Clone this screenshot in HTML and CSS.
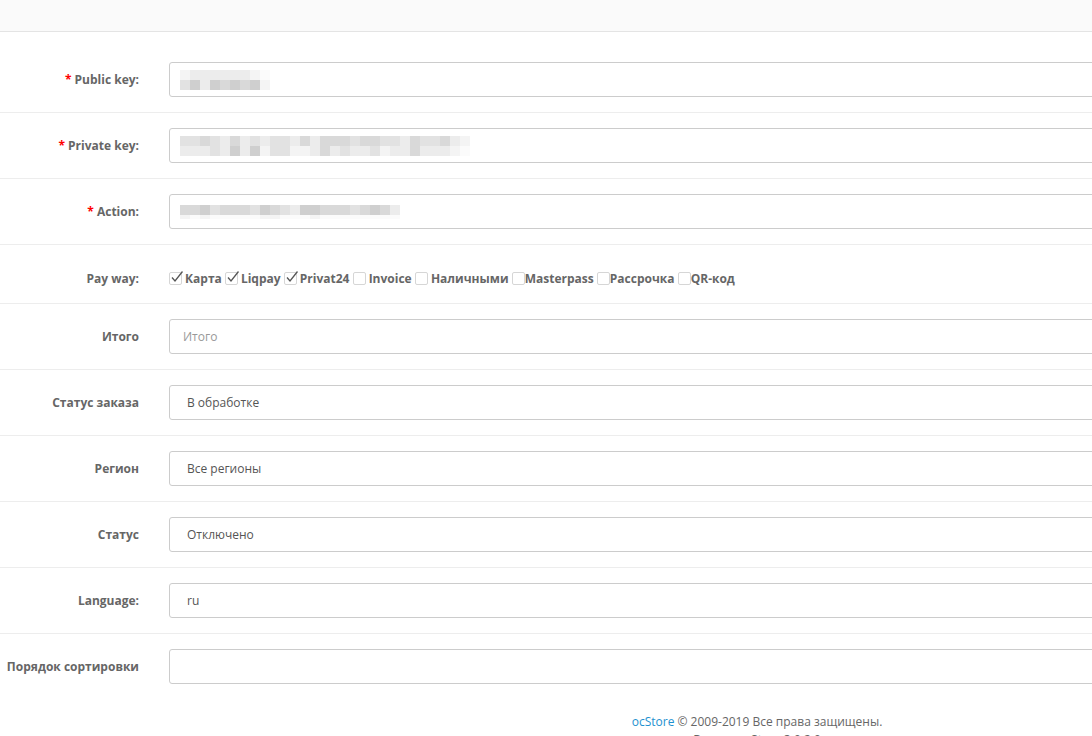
FILE: index.html
```html
<!DOCTYPE html>
<html lang="ru">
<head>
<meta charset="utf-8">
<title>LiqPay</title>
<link rel="stylesheet" href="styles.css">
</head>
<body>
<div class="page">
  <div class="topbar"></div>
  <form class="form">
    <div class="group">
      <label class="label"><span class="req">*</span> Public key:</label>
      <div class="control">
        <div class="input blurred">
          <div class="pix">
            <div class="pxrow"><span class="s1"></span><span class="s2"></span><span class="s2"></span><span class="s2"></span><span class="s2"></span><span class="s2"></span><span class="s2"></span><span class="s1"></span><span class="s0"></span></div>
            <div class="pxrow"><span class="s3"></span><span class="s5"></span><span class="s2"></span><span class="s5"></span><span class="s4"></span><span class="s5"></span><span class="s4"></span><span class="s5"></span><span class="s1"></span></div>
          </div>
        </div>
      </div>
    </div>
    <div class="group">
      <label class="label"><span class="req">*</span> Private key:</label>
      <div class="control">
        <div class="input blurred">
          <div class="pix">
            <div class="pxrow"><span class="s3"></span><span class="s3"></span><span class="s4"></span><span class="s3"></span><span class="s2"></span><span class="s4"></span><span class="s2"></span><span class="s3"></span><span class="s2"></span><span class="s3"></span><span class="s3"></span><span class="s2"></span><span class="s4"></span><span class="s2"></span><span class="s4"></span><span class="s4"></span><span class="s4"></span><span class="s3"></span><span class="s4"></span><span class="s4"></span><span class="s3"></span><span class="s3"></span><span class="s2"></span><span class="s4"></span><span class="s3"></span><span class="s3"></span><span class="s4"></span><span class="s2"></span><span class="s1"></span></div>
            <div class="pxrow"><span class="s2"></span><span class="s2"></span><span class="s2"></span><span class="s3"></span><span class="s2"></span><span class="s5"></span><span class="s2"></span><span class="s5"></span><span class="s1"></span><span class="s3"></span><span class="s3"></span><span class="s1"></span><span class="s1"></span><span class="s2"></span><span class="s4"></span><span class="s2"></span><span class="s3"></span><span class="s2"></span><span class="s2"></span><span class="s3"></span><span class="s1"></span><span class="s2"></span><span class="s2"></span><span class="s4"></span><span class="s2"></span><span class="s2"></span><span class="s2"></span><span class="s1"></span><span class="s0"></span></div>
          </div>
        </div>
      </div>
    </div>
    <div class="group">
      <label class="label"><span class="req">*</span> Action:</label>
      <div class="control">
        <div class="input blurred">
          <div class="pix">
            <div class="pxrow"><span class="s4"></span><span class="s4"></span><span class="s5"></span><span class="s3"></span><span class="s4"></span><span class="s4"></span><span class="s4"></span><span class="s3"></span><span class="s5"></span><span class="s4"></span><span class="s3"></span><span class="s2"></span><span class="s5"></span><span class="s5"></span><span class="s4"></span><span class="s4"></span><span class="s4"></span><span class="s3"></span><span class="s4"></span><span class="s5"></span><span class="s4"></span><span class="s2"></span></div>
            <div class="pxrow thin"><span class="s1"></span><span class="s0"></span><span class="s1"></span><span class="s0"></span><span class="s0"></span><span class="s0"></span><span class="s0"></span><span class="s0"></span><span class="s1"></span><span class="s1"></span><span class="s0"></span><span class="s0"></span><span class="s0"></span><span class="s1"></span><span class="s0"></span><span class="s0"></span><span class="s0"></span><span class="s0"></span><span class="s0"></span><span class="s0"></span><span class="s0"></span><span class="s0"></span></div>
          </div>
        </div>
      </div>
    </div>
    <div class="group top">
      <label class="label pad">Pay way:</label>
      <div class="control checks">
        <label class="cb"><span class="box on"><svg viewBox="0 0 13 13" width="13" height="13"><path d="M2 6.5 L5 10 L12.5 0.5" fill="none" stroke="#555" stroke-width="1.3"/></svg></span>Карта</label>
        <label class="cb"><span class="box on"><svg viewBox="0 0 13 13" width="13" height="13"><path d="M2 6.5 L5 10 L12.5 0.5" fill="none" stroke="#555" stroke-width="1.3"/></svg></span>Liqpay</label>
        <label class="cb"><span class="box on"><svg viewBox="0 0 13 13" width="13" height="13"><path d="M2 6.5 L5 10 L12.5 0.5" fill="none" stroke="#555" stroke-width="1.3"/></svg></span>Privat24</label>
        <label class="cb"><span class="box"></span> Invoice</label>
        <label class="cb"><span class="box"></span> Наличными</label>
        <label class="cb"><span class="box"></span>Masterpass</label>
        <label class="cb"><span class="box"></span>Рассрочка</label>
        <label class="cb"><span class="box"></span>QR-код</label>
      </div>
    </div>
    <div class="group">
      <label class="label">Итого</label>
      <div class="control"><input class="input" type="text" placeholder="Итого"></div>
    </div>
    <div class="group">
      <label class="label">Статус заказа</label>
      <div class="control"><div class="input select">В обработке</div></div>
    </div>
    <div class="group">
      <label class="label">Регион</label>
      <div class="control"><div class="input select">Все регионы</div></div>
    </div>
    <div class="group">
      <label class="label">Статус</label>
      <div class="control"><div class="input select">Отключено</div></div>
    </div>
    <div class="group">
      <label class="label">Language:</label>
      <div class="control"><div class="input select">ru</div></div>
    </div>
    <div class="group">
      <label class="label">Порядок сортировки</label>
      <div class="control"><input class="input" type="text" value=""></div>
    </div>
  </form>
  <footer class="footer">
    <p><a href="#" class="link">ocStore</a> © 2009-2019 Все права защищены.</p>
    <p>Версия ocStore 3.0.2.0</p>
  </footer>
</div>
</body>
</html>
```
FILE: styles.css
```css
html, body {
  margin: 0;
  padding: 0;
  background: #fff;
  overflow: hidden;
}
body {
  font-family: "Open Sans", "Liberation Sans", sans-serif;
  font-size: 12px;
  line-height: 18px;
  color: #666;
}
.page {
  width: 1514px;
}
.topbar {
  height: 31px;
  background: #fafafa;
  border-bottom: 1px solid #e4e4e4;
}
.form {
  margin: 0;
  padding: 15px 0 0;
}
.group {
  display: flex;
  align-items: center;
  padding: 15px 0;
  border-top: 1px solid #ededed;
}
.group:first-child {
  border-top: 0;
}
.group.top {
  align-items: flex-start;
  padding: 15px 0 15px;
}
.label {
  width: 139px;
  flex: none;
  margin-right: 30px;
  text-align: right;
  font-weight: 700;
  color: #666;
  white-space: nowrap;
}
.label.pad {
  padding-top: 10px;
}
.req {
  color: #f00;
}
.control {
  flex: 1;
  margin-right: 15px;
}
.input {
  display: block;
  box-sizing: border-box;
  width: 100%;
  height: 35px;
  padding: 8px 13px;
  border: 1px solid #ccc;
  border-radius: 3px;
  background: #fff;
  font-family: "Open Sans", "Liberation Sans", sans-serif;
  font-size: 12px;
  line-height: 17px;
  color: #555;
  outline: none;
}
.input::placeholder {
  color: #999;
}
.select {
  padding-left: 17px;
}
.blurred {
  padding: 0 0 0 10px;
  display: flex;
  align-items: center;
}
.pix {
  display: flex;
  flex-direction: column;
}
.pxrow {
  display: flex;
  height: 10px;
}
.pxrow.thin {
  height: 4px;
}
.pxrow span {
  width: 10px;
  height: 100%;
}
.s0 { background: #fbfbfb; }
.s1 { background: #f4f4f4; }
.s2 { background: #ececec; }
.s3 { background: #e2e2e2; }
.s4 { background: #d9d9d9; }
.s5 { background: #cfcfcf; }
.checks {
  padding-top: 10px;
  font-weight: 700;
  color: #666;
  white-space: nowrap;
}
.cb {
  display: inline;
}
.box {
  display: inline-block;
  position: relative;
  box-sizing: border-box;
  width: 13px;
  height: 13px;
  border: 1px solid #d6d6d6;
  border-radius: 2px;
  vertical-align: -2px;
  margin-right: 0;
  background: #fff;
}
.box.on {
  margin-right: 3px;
}
.box svg {
  position: absolute;
  left: 0;
  top: -2px;
}
.footer {
  margin-top: 14px;
  text-align: center;
  color: #666;
}
.footer p {
  margin: 0;
}
.link {
  color: #1e91cf;
  text-decoration: none;
}
```
